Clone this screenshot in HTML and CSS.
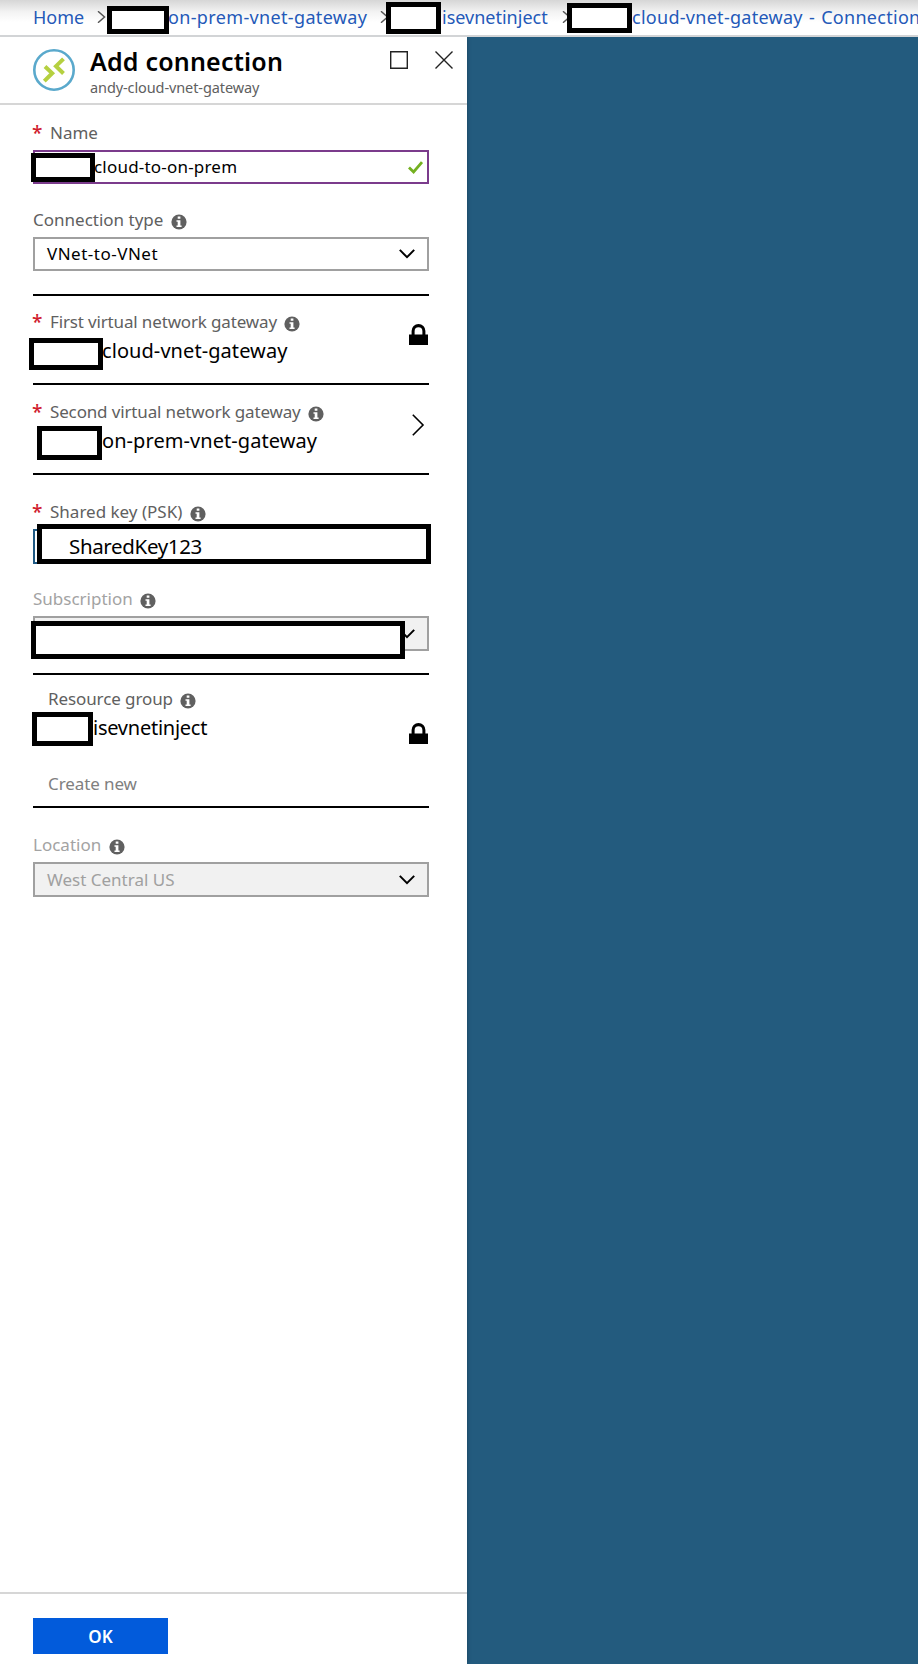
FILE: index.html
```html
<!DOCTYPE html>
<html lang="en">
<head>
<meta charset="utf-8">
<title>Add connection</title>
<link rel="stylesheet" href="styles.css">
</head>
<body>
<svg class="defs" aria-hidden="true">
  <symbol id="info" viewBox="0 0 16 16"><circle cx="8" cy="8" r="7.6" fill="#606060"/><path d="M6.7 2.6h2.7v2.2H6.7zM5.5 6.2h3.9v5.2h1.2v1.5H5.5v-1.5h1.2V7.7H5.5z" fill="#fff"/></symbol>
  <symbol id="down" viewBox="0 0 16 10"><path d="M.8.9 8 8.2 15.2.9" fill="none" stroke="#000" stroke-width="2"/></symbol>
  <symbol id="lock" viewBox="0 0 19 21"><path d="M0 10.6h2.6V7a6.9 6.9 0 0 1 13.8 0v3.6H19V21H0zM5.6 10.6h7.8V7.2a3.9 3.9 0 0 0-7.8 0z" fill="#000" fill-rule="evenodd"/></symbol>
  <symbol id="crumb" viewBox="0 0 9 12"><path d="M1 .3 7.5 6 1 11.7" fill="none" stroke="#555" stroke-width="1.5"/></symbol>
</svg>
<nav class="crumbs">
  <a class="crumb c-home"><span>Home</span></a>
  <svg class="sep s1"><use href="#crumb"/></svg>
  <i class="mask m1"></i>
  <a class="crumb c-prem"><span>on-prem-vnet-gateway</span></a>
  <svg class="sep s2"><use href="#crumb"/></svg>
  <i class="mask m2"></i>
  <a class="crumb c-ise"><span>isevnetinject</span></a>
  <svg class="sep s3"><use href="#crumb"/></svg>
  <i class="mask m3"></i>
  <a class="crumb c-cloud"><span>cloud-vnet-gateway - Connection</span></a>
</nav>
<main class="blade">
  <header class="head">
    <svg class="logo" viewBox="0 0 42 42"><circle cx="21" cy="21" r="19.7" fill="#fff" stroke="#5aa9cc" stroke-width="2.6"/><path d="M12 17.5 19.2 24.2 11.3 32.2M30.5 9.8 23 17.2 30.5 24.5" fill="none" stroke="#b5d040" stroke-width="4"/></svg>
    <div class="titles">
      <h1><span>Add connection</span></h1>
      <p><span>andy-cloud-vnet-gateway</span></p>
    </div>
    <svg class="max" viewBox="0 0 18 18"><path d="M.7.7h16.6v16.6H.7z" fill="none" stroke="#222" stroke-width="1.4"/></svg>
    <svg class="close" viewBox="0 0 18 18"><path d="M.5.5l17 17M17.5.5l-17 17" fill="none" stroke="#222" stroke-width="1.4"/></svg>
  </header>
  <form class="body">
    <div class="label"><b>*</b><span>Name</span></div>
    <div class="input valid"><i class="mask m-name"></i><span class="masked">cloud-to-on-prem</span>
      <svg class="tick" viewBox="0 0 15 13"><path d="M1 6.5 5.6 11 14 1.2" fill="none" stroke="#74b020" stroke-width="2.8"/></svg></div>

    <div class="label next"><span>Connection type</span><svg class="info"><use href="#info"/></svg></div>
    <div class="input"><span class="type">VNet-to-VNet</span><svg class="down"><use href="#down"/></svg></div>

    <section class="pick first">
      <div class="label long"><b>*</b><span>First virtual network gateway</span><svg class="info"><use href="#info"/></svg></div>
      <div class="value"><i class="mask m-first"></i><span>cloud-vnet-gateway</span></div>
      <svg class="lock"><use href="#lock"/></svg>
    </section>
    <section class="pick second">
      <div class="label long"><b>*</b><span>Second virtual network gateway</span><svg class="info"><use href="#info"/></svg></div>
      <div class="value"><i class="mask m-second"></i><span>on-prem-vnet-gateway</span></div>
      <svg class="right" viewBox="0 0 12 22"><path d="M.8.8 11 11 .8 21.2" fill="none" stroke="#000" stroke-width="1.6"/></svg>
    </section>

    <div class="label psk"><b>*</b><span>Shared key (PSK)</span><svg class="info"><use href="#info"/></svg></div>
    <div class="input tall focus"><div class="mask m-key"><span>SharedKey123</span></div></div>

    <div class="label sub dim"><span>Subscription</span><svg class="info"><use href="#info"/></svg></div>
    <div class="input tall off"><svg class="down"><use href="#down"/></svg><i class="mask m-sub"></i></div>

    <section class="pick group">
      <div class="label"><span>Resource group</span><svg class="info"><use href="#info"/></svg></div>
      <div class="value"><i class="mask m-group"></i><span>isevnetinject</span></div>
      <div class="label create"><span>Create new</span></div>
      <svg class="lock"><use href="#lock"/></svg>
    </section>

    <div class="label loc dim"><span>Location</span><svg class="info"><use href="#info"/></svg></div>
    <div class="input tall off"><span>West Central US</span><svg class="down"><use href="#down"/></svg></div>
  </form>
  <footer class="foot"><button type="button"><span>OK</span></button></footer>
</main>
</body>
</html>
```
FILE: styles.css
```css
* { box-sizing: border-box; }
body {
  margin: 0;
  width: 918px;
  height: 1664px;
  overflow: hidden;
  display: flex;
  flex-direction: column;
  background: #235b7e;
  color: #000;
  font-family: "Noto Sans", "Open Sans", sans-serif;
  font-size: 17px;
}
.defs { display: none; }
svg { display: block; flex: none; overflow: visible; }
span { white-space: nowrap; }

/* breadcrumb */
.crumbs {
  position: relative;
  flex: none;
  height: 37px;
  overflow: hidden;
  display: flex;
  border-bottom: 2px solid #d2d4d6;
  background: linear-gradient(#d6d6d6, #f3f3f3 12px, #fff 22px);
}
.crumb { flex: none; line-height: 34px; font-size: 18px; color: #2459b8; }
.c-home { width: 64px; padding-left: 33px; box-sizing: content-box; }
.c-prem { width: 212px; margin-left: 62px; letter-spacing: .35px; }
.c-ise { width: 120px; margin-left: 53px; }
.c-cloud { width: 286px; margin-left: 61px; letter-spacing: .28px; word-spacing: 1.2px; }
.sep { width: 9px; height: 12px; margin-top: 11px; }

/* black-framed cover boxes */
.mask { position: absolute; border: 5px solid #000; background: #fff; }
.m1 { left: 107px; top: 6px; width: 62px; height: 28px; }
.m2 { left: 386px; top: 2px; width: 55px; height: 32px; }
.m3 { left: 567px; top: 3px; width: 65px; height: 30px; }
.m-name { left: -4px; top: 1px; width: 64px; height: 29px; }
.m-first { left: -4px; top: 2px; width: 74px; height: 32px; }
.m-second { left: 4px; top: 0; width: 65px; height: 34px; }
.m-key { left: 2px; top: -7px; width: 394px; height: 40px; padding-left: 27px; line-height: 34px; font-size: 20.5px; letter-spacing: -.35px; }
.m-sub { left: -4px; top: 3px; width: 374px; height: 38px; }
.m-group { left: -1px; top: -1px; width: 61px; height: 34px; }

/* blade */
.blade { width: 467px; flex: 1; display: flex; flex-direction: column; background: #fff; box-shadow: 0 0 4px rgba(0, 0, 0, .3); clip-path: inset(0 -6px 0 0); }
.head { height: 68px; display: flex; padding: 12px 14px 0 33px; border-bottom: 2px solid #d6d6d6; }
.logo { width: 42px; height: 42px; }
.titles { width: 300px; margin: -6px 0 0 15px; }
h1 { margin: 0; font-size: 25px; font-weight: 600; line-height: 36px; letter-spacing: .2px; }
p { margin: 0; font-size: 14.5px; line-height: 16px; color: #606060; letter-spacing: -.1px; }
.max { width: 18px; height: 18px; margin-top: 2px; }
.close { width: 18px; height: 18px; margin: 2px 0 0 27px; }

.body { flex: 1; padding: 15px 38px 0 33px; }
.label { height: 24px; display: flex; line-height: 26px; color: #606060; }
.label b { width: 17px; color: #d0202e; font-size: 19px; font-weight: 500; line-height: 26px; margin-left: -1px; margin-right: 1px; }
.long { letter-spacing: -.15px; }
.info { width: 16px; height: 16px; margin: 6.5px 0 0 7.5px; }
.dim { color: #a3a3a3; }
.next { margin-top: 23px; }
.input {
  position: relative;
  height: 34px;
  margin-top: 6px;
  padding: 0 12px;
  display: flex;
  align-items: center;
  border: 2px solid #a0a0a0;
}
.input > span { padding-bottom: 2px; }
.tall { height: 35px; }
.tall > span { padding-bottom: 0; }
.valid { border-color: #7b3b8c; padding-right: 4px; }
.focus { border-color: #1f5a85; }
.off { background: #f1f1f1; color: #a0a0a0; }
.masked { margin-left: 47px; letter-spacing: .2px; }
.type { letter-spacing: .5px; }
.tick { width: 15px; height: 13px; margin-left: auto; }
.down { width: 16px; height: 10px; margin-left: auto; }

.pick { position: relative; border-bottom: 2px solid #000; }
.first { height: 91px; margin-top: 23px; padding-top: 13px; border-top: 2px solid #000; }
.second { height: 90px; padding-top: 14px; }
.value { position: relative; height: 28px; margin-top: 3px; padding-left: 69px; font-size: 20px; line-height: 30px; letter-spacing: .07px; }
.lock { position: absolute; left: 376px; top: 28px; width: 19px; height: 21px; }
.right { position: absolute; left: 379px; top: 29px; width: 12px; height: 22px; }
.psk { margin-top: 24px; }
.sub { margin-top: 22px; }
.group { height: 135px; margin-top: 22px; padding-top: 11px; border-top: 2px solid #000; }
.group .label { padding-left: 15px; letter-spacing: -.1px; }
.group .value { padding-left: 60px; letter-spacing: -.25px; }
.group .create { margin-top: 30px; color: #808080; }
.group .lock { top: 48px; }
.loc { margin-top: 24px; }

.foot { height: 72px; padding: 24px 33px 0; border-top: 2px solid #d6d6d6; }
button { display: block; width: 135px; height: 36px; padding: 2px 0 0; border: 0; background: #025bdb; color: #fff; font: 600 17px/34px "Noto Sans", "Open Sans", sans-serif; }
```
